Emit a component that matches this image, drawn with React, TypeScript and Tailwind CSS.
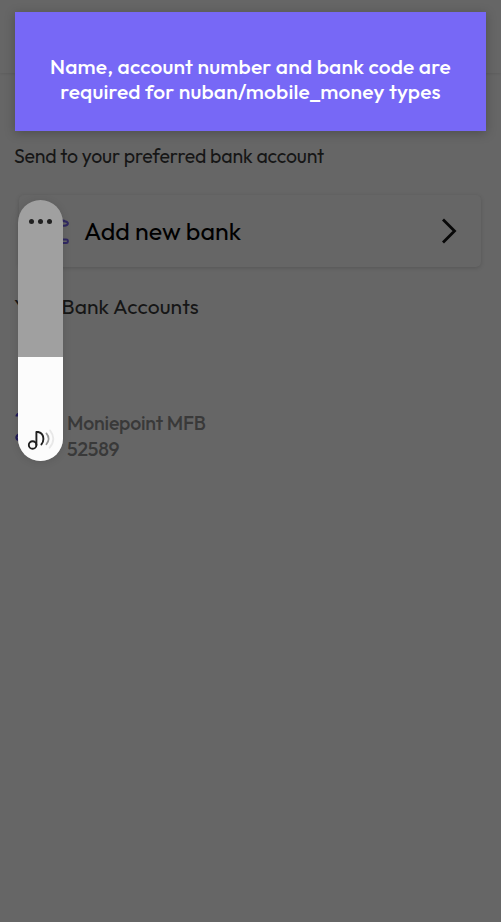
import React from "react";

function BankIcon() {
  return (
    <svg className="h-[28px] w-[36px] shrink-0" viewBox="0 0 36 28" fill="none" stroke="#302862" strokeWidth="2">
      <path d="M5 14V5L18 1l13 3" />
      <path d="M28 4.2h2q3.9.3 3.9 2.3T30 8.8h-2M28 22.4h4.2q1.6 0 1.6 1.2v1.1q0 1.2-1.6 1.2H28" />
      <path d="M4 26h22M10 10v12M18 10v12" />
    </svg>
  );
}

function AccountIcon() {
  return (
    <svg className="h-[34px] w-[36px] shrink-0" viewBox="0 0 36 34" fill="none" stroke="#211b58" strokeWidth="2.2">
      <path d="M2.4 6.5Q2.8 4 5.5 3.2M5.5 30.5Q2.4 29.5 2.4 27.5T5.5 24" />
    </svg>
  );
}

function Toast() {
  return (
    <div
      role="alert"
      className="absolute left-[15px] top-[12px] flex h-[119px] w-[471px] flex-col items-center bg-[#7768f6] pt-[42px] text-[21px] font-medium leading-[25px] text-white shadow-[0_2px_10px_rgba(0,0,0,0.25)]"
    >
      <span className="whitespace-nowrap tracking-[0.18px]">Name, account number and bank code are</span>
      <span className="whitespace-nowrap tracking-[0.18px]">required for nuban/mobile_money types</span>
    </div>
  );
}

function VolumeSlider() {
  return (
    <div className="absolute left-[18px] top-[200px] flex h-[261px] w-[45px] flex-col overflow-hidden rounded-full bg-[#a0a0a0] shadow-[0_1px_8px_rgba(0,0,0,0.12)]">
      <div className="flex h-[157px] justify-center gap-[4px] pt-[19px]">
        <i className="size-[5px] rounded-full bg-[#202020]" />
        <i className="size-[5px] rounded-full bg-[#202020]" />
        <i className="size-[5px] rounded-full bg-[#202020]" />
      </div>
      <div className="flex flex-1 items-start bg-[#fcfcfc] pl-[9px] pt-[72px]">
        <svg className="h-[24px] w-[30px]" viewBox="0 0 30 24" fill="none" strokeLinecap="round">
          <circle cx="5.6" cy="16" r="3.8" stroke="#202020" strokeWidth="1.9" />
          <path d="M9.4 16V3h1.8Q16.4 4.2 16.4 10q0 3-2 5.4" stroke="#202020" strokeWidth="1.9" strokeLinejoin="round" />
          <path d="M19.4 4.4q4.4 5.2 0 10.9" stroke="#999" strokeWidth="1.7" />
          <path d="M23 1.4q6.8 8.6-.4 17.4" stroke="#e8e8e8" strokeWidth="1.8" />
        </svg>
      </div>
    </div>
  );
}

export default function App() {
  return (
    <main className="relative flex h-[922px] w-full flex-col overflow-hidden bg-[#666666] font-['Outfit','Lato',sans-serif]">
      <header className="h-[73px] shrink-0 bg-[#666666] shadow-[0_1px_2px_rgba(0,0,0,0.08)]" />
      <section className="flex flex-col pl-[14px] pr-[20px] pt-[70px]">
        <p className="h-[26px] whitespace-nowrap text-[19.5px] leading-[26px] tracking-[-0.17px] text-[#161616]">
          Send to your preferred bank account
        </p>
        <button className="ml-[5px] mt-[26px] flex h-[72px] items-center rounded-[5px] bg-[#666666] pl-[15px] pr-[23px] text-left shadow-[0_1px_4px_rgba(0,0,0,0.16)]">
          <BankIcon />
          <span className="ml-[14px] whitespace-nowrap text-[25px] leading-[32px] text-black">Add new bank</span>
          <svg className="ml-auto h-[26px] w-[18px]" viewBox="0 0 18 26" fill="none" stroke="#080808" strokeWidth="2.8">
            <path d="M3 1.5L14.5 13 3 24.5" />
          </svg>
        </button>
        <h2 className="mt-[25px] whitespace-nowrap text-[21px] font-normal leading-[28px] tracking-[0.13px] text-[#161616]">
          Your Bank Accounts
        </h2>
        <div className="mt-[90px] flex items-start">
          <AccountIcon />
          <div className="ml-[17px] flex flex-col whitespace-nowrap text-[19.5px] font-medium leading-[26px] tracking-[-0.2px] text-[#393939]">
            <span>Moniepoint MFB</span>
            <span>52589</span>
          </div>
        </div>
      </section>
      <VolumeSlider />
      <Toast />
    </main>
  );
}
